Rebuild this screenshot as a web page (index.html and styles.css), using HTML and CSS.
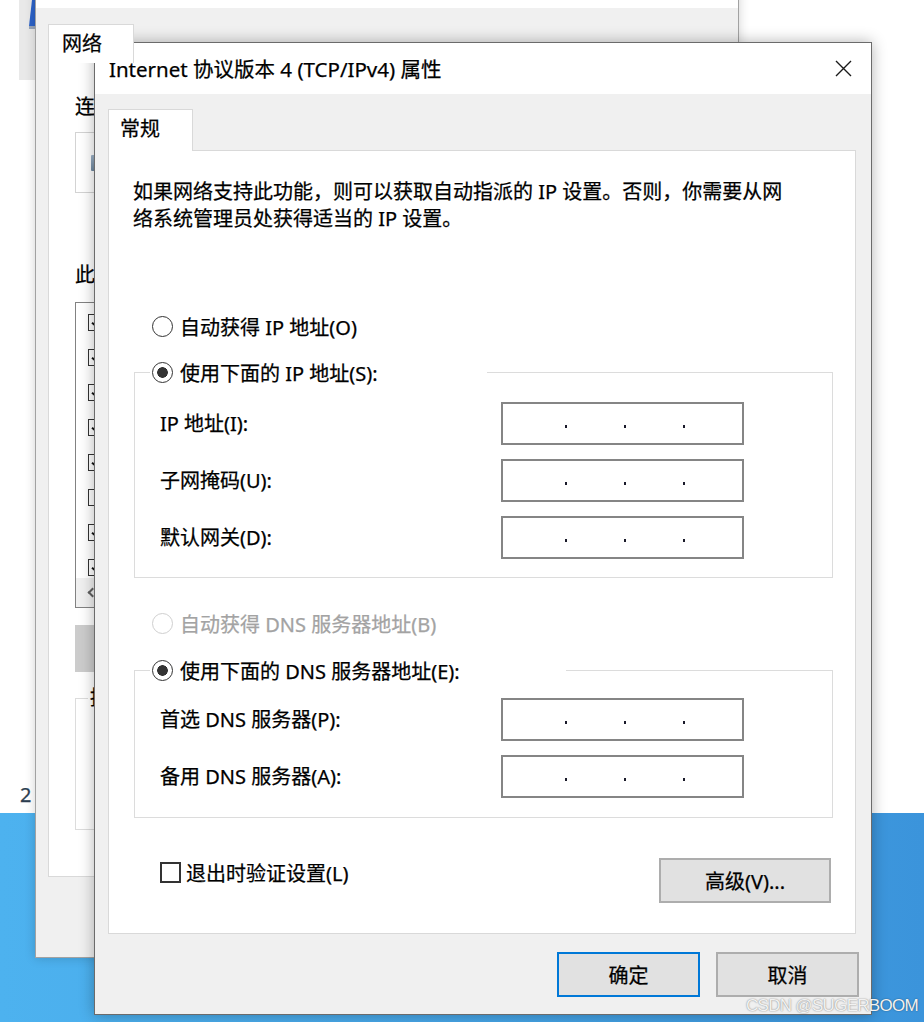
FILE: index.html
```html
<!DOCTYPE html>
<html lang="zh-CN">
<head>
<meta charset="utf-8">
<title>Internet 协议版本 4 (TCP/IPv4) 属性</title>
<link rel="stylesheet" href="styles.css">
</head>
<body>
<div class="desktop">
  <div class="backdrop">
    <div class="explorer-strip">
      <svg width="16" height="80" viewBox="0 0 16 80"><polygon points="13,0 16,0 16,26 10,26" fill="#2d63c9"/><polygon points="10,26 16,26 16,29 10,29" fill="#9aa7bb"/></svg>
    </div>
    <span class="backdrop-num">2</span>
  </div>
  <div class="wallpaper"></div>

  <section class="props-window">
    <div class="props-titlebar"></div>
    <div class="props-body">
      <div class="props-tabs"><div class="props-tab">网络</div></div>
      <div class="props-panel">
        <div class="props-label">连接</div>
        <div class="adapter-box"><span class="adapter-icon"></span></div>
        <div class="props-label spaced">此连</div>
        <div class="item-list">
          <ul class="items">
            <li><span class="chk on"></span></li>
            <li><span class="chk on"></span></li>
            <li><span class="chk on"></span></li>
            <li><span class="chk on"></span></li>
            <li><span class="chk on"></span></li>
            <li><span class="chk"></span></li>
            <li><span class="chk on"></span></li>
            <li><span class="chk on"></span></li>
          </ul>
          <div class="hscroll"><span class="hscroll-arrow"></span></div>
        </div>
        <div class="props-buttons">
          <span class="props-btn hover"></span>
          <span class="props-btn"></span>
          <span class="props-btn"></span>
        </div>
        <fieldset class="desc-group"><legend>描述</legend></fieldset>
      </div>
    </div>
  </section>

  <section class="dialog">
    <div class="dialog-titlebar">
      <span class="dialog-title">Internet 协议版本 4 (TCP/IPv4) 属性</span>
      <svg class="close-icon" width="17" height="17" viewBox="0 0 17 17"><path d="M1 1L16 16M16 1L1 16" stroke="#1a1a1a" stroke-width="1.4" fill="none"/></svg>
    </div>
    <div class="dialog-body">
      <div class="tabstrip"><div class="tab">常规</div></div>
      <div class="tab-panel">
        <p class="intro">如果网络支持此功能，则可以获取自动指派的 IP 设置。否则，你需要从网络系统管理员处获得适当的 IP 设置。</p>

        <label class="radio-row first"><input type="radio" name="ip"><span>自动获得 IP 地址(O)</span></label>
        <fieldset class="group">
          <legend class="legend-ip"><label class="radio-row"><input type="radio" name="ip" checked><span>使用下面的 IP 地址(S):</span></label></legend>
          <div class="ip-rows">
            <span class="field-label">IP 地址(I):</span>
            <div class="ipbox"><i></i><i></i><i></i></div>
            <span class="field-label">子网掩码(U):</span>
            <div class="ipbox"><i></i><i></i><i></i></div>
            <span class="field-label">默认网关(D):</span>
            <div class="ipbox"><i></i><i></i><i></i></div>
          </div>
        </fieldset>

        <label class="radio-row second disabled"><input type="radio" name="dns" disabled><span>自动获得 DNS 服务器地址(B)</span></label>
        <fieldset class="group group-dns">
          <legend class="legend-dns"><label class="radio-row"><input type="radio" name="dns" checked><span>使用下面的 DNS 服务器地址(E):</span></label></legend>
          <div class="ip-rows">
            <span class="field-label">首选 DNS 服务器(P):</span>
            <div class="ipbox"><i></i><i></i><i></i></div>
            <span class="field-label">备用 DNS 服务器(A):</span>
            <div class="ipbox"><i></i><i></i><i></i></div>
          </div>
        </fieldset>

        <div class="panel-bottom">
          <label class="check-row"><input type="checkbox"><span>退出时验证设置(L)</span></label>
          <button class="btn advanced" type="button">高级(V)...</button>
        </div>
      </div>
      <div class="footer">
        <button class="btn default" type="button">确定</button>
        <button class="btn" type="button">取消</button>
      </div>
    </div>
  </section>

  <div class="watermark">CSDN @SUGERBOOM</div>
</div>
</body>
</html>
```
FILE: styles.css
```css
* { box-sizing: border-box; }

html, body {
  margin: 0;
  padding: 0;
}

body {
  width: 924px;
  height: 1022px;
  overflow: hidden;
  background: #fff;
  color: #000;
  font-family: "Noto Sans", "Noto Sans CJK SC", sans-serif;
  font-size: 20px;
  -webkit-text-stroke: 0.25px currentColor;
}

.desktop {
  position: relative;
  width: 924px;
  height: 1022px;
  display: flex;
  flex-direction: column;
  overflow: hidden;
}

/* ---------- desktop background ---------- */
.backdrop {
  height: 813px;
  flex: none;
  background: #fff;
  display: flex;
  flex-direction: column;
  align-items: flex-start;
}

.explorer-strip {
  margin-left: 19px;
  width: 16px;
  height: 80px;
  background: #e9e9e9;
}

.explorer-strip svg { display: block; }

.backdrop-num {
  margin-top: auto;
  margin-left: 20px;
  margin-bottom: 6px;
  line-height: 24px;
  font-size: 20px;
  color: #2c3e50;
}

.wallpaper {
  flex: 1;
  background: linear-gradient(90deg, #4db2ef 0%, #47a7e8 45%, #3b94db 100%);
}

/* ---------- background window (network properties) ---------- */
.props-window {
  position: absolute;
  left: 35px;
  top: -40px;
  width: 704px;
  height: 998px;
  border: 1px solid #a2a2a2;
  background: #f0f0f0;
  box-shadow: 0 0 10px rgba(0, 0, 0, 0.18);
  display: flex;
  flex-direction: column;
}

.props-titlebar {
  height: 47px;
  background: #fff;
  flex: none;
}

.props-body {
  padding: 16px 12px 0 12px;
  display: flex;
  flex-direction: column;
}

.props-tabs { display: flex; }

.props-tab {
  width: 86px;
  height: 39px;
  margin-bottom: -1px;
  padding-left: 13px;
  background: #fff;
  border: 1px solid #d9d9d9;
  border-bottom: none;
  line-height: 37px;
  position: relative;
  z-index: 1;
}

.props-panel {
  width: 678px;
  height: 815px;
  background: #fff;
  border: 1px solid #d9d9d9;
  padding: 30px 24px 0 26px;
  display: flex;
  flex-direction: column;
}

.props-label { line-height: 28px; }
.props-label.spaced { margin-top: 68px; }

.adapter-box {
  margin-top: 11px;
  height: 61px;
  border: 1px solid #d3d3d3;
  display: flex;
  align-items: center;
  gap: 10px;
  padding-left: 15px;
}

.adapter-icon {
  width: 18px;
  height: 16px;
  background: linear-gradient(#9fb4c9, #6f889f);
  border-radius: 1px;
}

.item-list {
  margin-top: 13px;
  height: 306px;
  border: 1px solid #828282;
  display: flex;
  flex-direction: column;
}

.items {
  list-style: none;
  margin: 0;
  padding: 2px 0 0 12px;
  flex: 1;
  overflow: hidden;
}

.items li {
  height: 35px;
  display: flex;
  align-items: center;
}

.chk {
  width: 17px;
  height: 17px;
  border: 1px solid #333;
  background: #fff;
  flex: none;
  display: flex;
  align-items: center;
  justify-content: center;
}

.chk.on::after {
  content: "";
  width: 4px;
  height: 8px;
  border: solid #111;
  border-width: 0 2px 2px 0;
  transform: rotate(40deg) translate(-1px, -1px);
}

.hscroll {
  height: 29px;
  background: #f0f0f0;
  display: flex;
  align-items: center;
  padding-left: 13px;
}

.hscroll-arrow {
  width: 7px;
  height: 7px;
  border: solid #606060;
  border-width: 0 0 2.5px 2.5px;
  transform: rotate(45deg);
}

.props-buttons {
  margin-top: 17px;
  display: flex;
  gap: 16px;
}

.props-btn {
  width: 150px;
  height: 47px;
  background: #e1e1e1;
  border: 1px solid #adadad;
}

.props-btn.hover {
  background: #cccccc;
  border-color: #cccccc;
}

.desc-group {
  margin: 12px 0 0 0;
  height: 146px;
  border: 1px solid #dcdcdc;
  padding: 0;
  min-width: 0;
}

.desc-group legend {
  margin-left: 12px;
  padding: 0 2px;
  line-height: 28px;
}

/* ---------- foreground dialog ---------- */
.dialog {
  position: absolute;
  left: 94px;
  top: 42px;
  width: 778px;
  border: 1px solid #6b6b6b;
  background: #f0f0f0;
  box-shadow: 0 0 14px rgba(0, 0, 0, 0.3);
  display: flex;
  flex-direction: column;
}

.dialog-titlebar {
  height: 51px;
  flex: none;
  background: #fff;
  display: flex;
  align-items: center;
  justify-content: space-between;
  padding: 0 19px 0 14px;
}

.dialog-title {
  font-size: 20.5px;
  line-height: 28px;
}

.close-icon { display: block; }

.dialog-body {
  padding: 15px 15px 17px 13px;
  display: flex;
  flex-direction: column;
}

.tabstrip { display: flex; }

.tab {
  width: 85px;
  height: 42px;
  margin-bottom: -1px;
  padding-left: 11px;
  background: #fff;
  border: 1px solid #d9d9d9;
  border-bottom: none;
  line-height: 38px;
  position: relative;
  z-index: 1;
}

.tab-panel {
  background: #fff;
  border: 1px solid #d9d9d9;
  padding: 27px 22px 30px 24px;
  display: flex;
  flex-direction: column;
}

.intro {
  margin: 0;
  width: 664px;
  line-height: 27px;
}

.radio-row {
  display: flex;
  align-items: center;
  gap: 7px;
  height: 28px;
  white-space: nowrap;
}

.radio-row.first { margin: 80px 0 0 19px; }
.radio-row.second { margin: 31px 0 0 19px; }

.radio-row input {
  appearance: none;
  -webkit-appearance: none;
  margin: 0;
  width: 21px;
  height: 21px;
  border: 1.5px solid #333;
  border-radius: 50%;
  background: #fff;
  flex: none;
}

.radio-row input:checked {
  background: radial-gradient(circle, #333 0 5px, #fff 5.6px);
}

.radio-row.disabled { color: #a3a3a3; }
.radio-row.disabled input { border-color: #cfcfcf; }

.group {
  margin: 18px 0 0 1px;
  padding: 16px 88px 18px 15px;
  border: 1px solid #dcdcdc;
  min-width: 0;
}

.group-dns {
  margin-top: 19px;
  padding-top: 14px;
  padding-bottom: 19px;
}

.group legend {
  padding: 0 0 0 2px;
  height: 28px;
}

.legend-ip { width: 337px; }
.legend-dns { width: 416px; }

.ip-rows {
  margin-left: 10px;
  display: grid;
  grid-template-columns: 1fr 243px;
  row-gap: 14px;
  align-items: center;
}

.field-label { line-height: 28px; }

.ipbox {
  height: 43px;
  border: 2px solid #858585;
  background: #fff;
  display: flex;
  align-items: center;
  gap: 57px;
  padding: 6px 0 0 62px;
}

.ipbox i {
  width: 2px;
  height: 3px;
  background: #1a1a2a;
}

.panel-bottom {
  margin-top: 40px;
  display: flex;
  justify-content: space-between;
  align-items: flex-start;
}

.check-row {
  margin-left: 27px;
  height: 28px;
  display: flex;
  align-items: center;
  gap: 5px;
}

.check-row input {
  appearance: none;
  -webkit-appearance: none;
  margin: 0;
  width: 21px;
  height: 21px;
  border: 2px solid #333;
  background: #fff;
}

.btn {
  width: 143px;
  height: 45px;
  background: #e1e1e1;
  border: 2px solid #adadad;
  font: inherit;
  color: #000;
  padding: 0;
}

.btn.advanced {
  width: 172px;
  margin-right: 2px;
}

.btn.default { border-color: #0078d7; }

.footer {
  margin: 18px -3px 0 0;
  display: flex;
  justify-content: flex-end;
  gap: 16px;
}

.watermark {
  position: absolute;
  right: 6px;
  bottom: 5px;
  font-family: "Liberation Sans", Arial, sans-serif;
  font-size: 17px;
  letter-spacing: -0.7px;
  line-height: 22px;
  color: #f2f2f2;
  -webkit-text-stroke: 0;
  text-shadow: 0 0 1.5px rgba(0, 0, 0, 0.55);
}
```
